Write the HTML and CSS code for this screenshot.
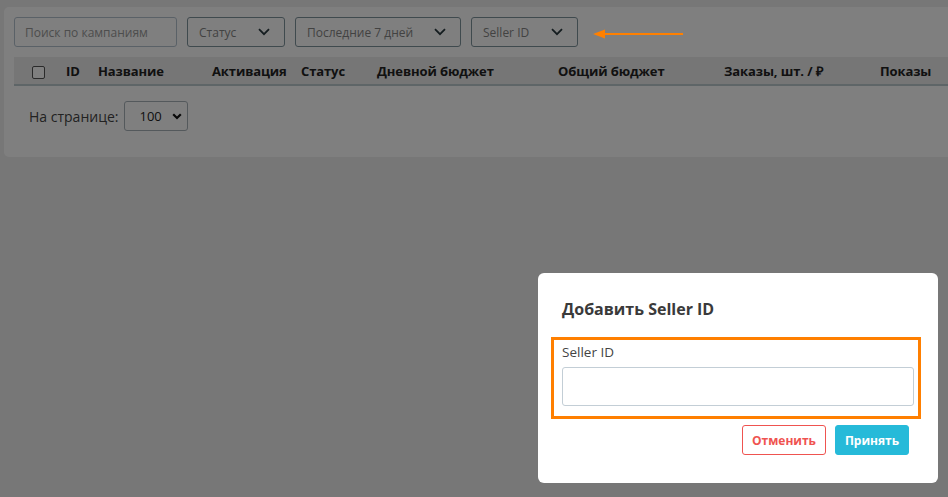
FILE: index.html
```html
<!DOCTYPE html>
<html lang="ru">
<head>
<meta charset="utf-8">
<title>Кампании</title>
<link rel="stylesheet" href="styles.css">
</head>
<body>
<div class="page">
  <div class="card">
    <div class="filters">
      <div class="search">Поиск по кампаниям</div>
      <div class="select w-status"><span>Статус</span><svg class="chev" viewBox="0 0 12 8" width="12" height="8"><path d="M1 1.2 6 6.2 11 1.2" fill="none" stroke="currentColor" stroke-width="1.8"/></svg></div>
      <div class="select w-date"><span>Последние 7 дней</span><svg class="chev" viewBox="0 0 12 8" width="12" height="8"><path d="M1 1.2 6 6.2 11 1.2" fill="none" stroke="currentColor" stroke-width="1.8"/></svg></div>
      <div class="select w-seller"><span>Seller ID</span><svg class="chev" viewBox="0 0 12 8" width="12" height="8"><path d="M1 1.2 6 6.2 11 1.2" fill="none" stroke="currentColor" stroke-width="1.8"/></svg></div>
    </div>
    <div class="thead">
      <div class="th c-check"><span class="checkbox"></span></div>
      <div class="th">ID</div>
      <div class="th">Название</div>
      <div class="th">Активация</div>
      <div class="th">Статус</div>
      <div class="th">Дневной бюджет</div>
      <div class="th">Общий бюджет</div>
      <div class="th">Заказы, шт. / ₽</div>
      <div class="th">Показы</div>
    </div>
    <div class="pager">
      <span class="pager-label">На странице:</span>
      <div class="per-page"><span>100</span><svg viewBox="0 0 10 7" width="10" height="7"><path d="M1.2 1.2 5 5 8.8 1.2" fill="none" stroke="currentColor" stroke-width="2.2"/></svg></div>
    </div>
  </div>
</div>

<div class="overlay"></div>

<svg class="arrow" width="92" height="12" viewBox="0 0 92 12"><path d="M10 6H90" stroke="#ff8000" stroke-width="2"/><path d="M0 6 12 1.5 12 10.5Z" fill="#ff8000"/></svg>

<div class="modal">
  <h2 class="modal-title">Добавить Seller ID</h2>
  <div class="form-group">
    <label class="label">Seller ID</label>
    <div class="input"></div>
  </div>
  <div class="actions">
    <button class="btn btn-cancel">Отменить</button>
    <button class="btn btn-ok">Принять</button>
  </div>
</div>
</body>
</html>
```

FILE: styles.css
```css
* { box-sizing: border-box; }
html, body { margin: 0; height: 100%; }
body {
  font-family: "Open Sans", "Liberation Sans", sans-serif;
  background: #eeeeee;
  color: #333;
  overflow: hidden;
}
.page { padding: 7px 0 0 4px; }
.card {
  background: #ffffff;
  border-radius: 5px 0 0 5px;
  padding: 10px 0 10px 10px;
  height: 150px;
}
.filters { display: flex; gap: 10px; height: 30px; }
.search {
  width: 163px;
  border: 1px solid #b5c3cf;
  border-radius: 3px;
  font-size: 12px;
  color: #9a9a9a;
  padding: 0 10px;
  display: flex;
  align-items: center;
}
.select {
  border: 1px solid #7f949c;
  border-radius: 3px;
  font-size: 12px;
  color: #858585;
  padding: 0 14px 0 11px;
  display: flex;
  align-items: center;
  justify-content: space-between;
}
.select .chev { color: #2a3a40; }
.w-status { width: 98px; }
.w-date { width: 166px; }
.w-seller { width: 107px; }

.thead {
  margin-top: 10px;
  display: grid;
  grid-template-columns: 42px 32px 114px 89px 76px 181px 166px 156px 1fr;
  background: #ececec;
  border-bottom: 2px solid #bccbce;
  height: 29px;
}
.th {
  font-size: 13px;
  font-weight: 700;
  color: #222;
  padding-left: 10px;
  display: flex;
  align-items: center;
  white-space: nowrap;
  letter-spacing: -0.1px;
}
.c-check { padding-left: 18px; }
.checkbox {
  width: 13px; height: 13px;
  border: 1px solid #555;
  border-radius: 2px;
  background: #fff;
  margin-top: 3px;
}
.pager {
  display: flex;
  align-items: center;
  gap: 6px;
  margin-top: 15px;
  padding-left: 15px;
}
.pager-label { font-size: 14px; color: #444; }
.per-page {
  width: 64px; height: 30px;
  border: 1px solid #a9b2b9;
  border-radius: 3px;
  display: flex;
  align-items: center;
  justify-content: space-between;
  padding: 0 5px 0 14px;
  font-size: 13px;
  color: #222;
}
.per-page svg { color: #111; }

.overlay {
  position: fixed;
  inset: 0;
  background: rgba(0, 0, 0, 0.5);
}
.arrow {
  position: absolute;
  left: 593px;
  top: 28px;
}
.modal {
  position: absolute;
  left: 538px;
  top: 273px;
  width: 400px;
  height: 210px;
  background: #fff;
  border-radius: 6px;
  padding: 24px 24px 0 24px;
}
.modal-title {
  margin: 0;
  font-size: 16px;
  font-weight: 700;
  color: #3a3a3a;
  line-height: 24px;
}
.form-group {
  margin: 16px -7px 0 -11px;
  border: 3px solid #ff7f00;
  padding: 3px 4px 10px 8px;
  height: 82px;
}
.label {
  display: block;
  font-size: 13.5px;
  color: #444;
  line-height: 18px;
  margin-bottom: 6px;
}
.input {
  height: 39px;
  border: 1px solid #c3ced6;
  border-radius: 3px;
}
.actions {
  display: flex;
  justify-content: flex-end;
  gap: 9px;
  margin-top: 6px;
  padding-right: 5px;
}
.btn {
  height: 30px;
  border-radius: 3px;
  font-family: inherit;
  font-size: 12px;
  font-weight: 700;
  padding: 0;
  cursor: pointer;
}
.btn-cancel {
  width: 84px;
  background: #fff;
  border: 1px solid #ef5350;
  color: #ef5350;
}
.btn-ok {
  width: 74px;
  background: #26bad9;
  border: 1px solid #26bad9;
  color: #fff;
}
```
